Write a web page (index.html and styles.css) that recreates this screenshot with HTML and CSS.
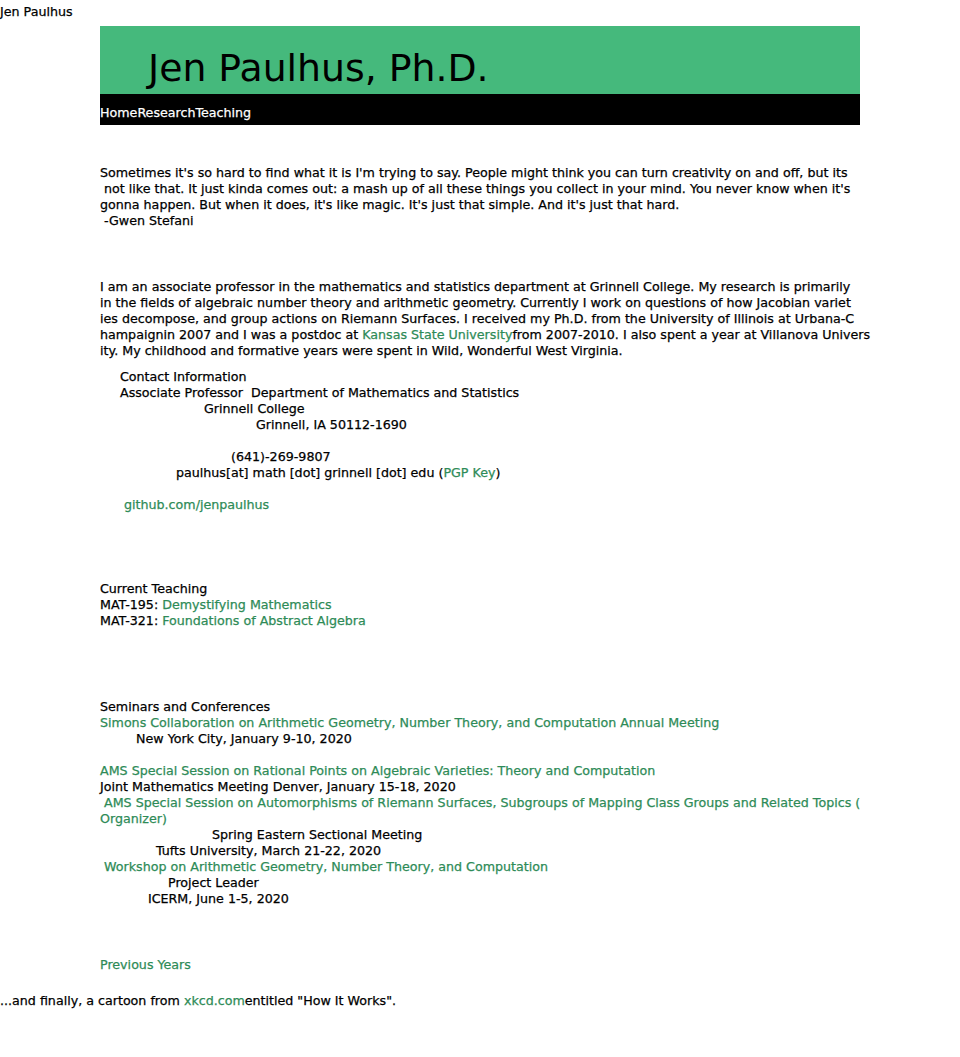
FILE: index.html
```html
<!DOCTYPE html>
<html>
<head>
<meta charset="utf-8">
<title>Jen Paulhus</title>
<link rel="stylesheet" href="styles.css">
</head>
<body>
<div class="site-name">Jen Paulhus</div>
<div class="page">
  <header class="banner">
    <h1 class="banner-title">Jen Paulhus, Ph.D.</h1>
  </header>
  <nav class="nav"><a href="#">Home</a><a href="#">Research</a><a href="#">Teaching</a></nav>

  <p class="quote">Sometimes it's so hard to find what it is I'm trying to say. People might think you can turn creativity on and off, but its<br>&nbsp;not like that. It just kinda comes out: a mash up of all these things you collect in your mind. You never know when it's<br>gonna happen. But when it does, it's like magic. It's just that simple. And it's just that hard.<br>&nbsp;-Gwen Stefani</p>

  <p class="bio">I am an associate professor in the mathematics and statistics department at Grinnell College. My research is primarily<br>in the fields of algebraic number theory and arithmetic geometry. Currently I work on questions of how Jacobian variet<br>ies decompose, and group actions on Riemann Surfaces. I received my Ph.D. from the University of Illinois at Urbana-C<br>hampaignin 2007 and I was a postdoc at <a href="#">Kansas State University</a>from 2007-2010. I also spent a year at Villanova Univers<br>ity. My childhood and formative years were spent in Wild, Wonderful West Virginia.</p>

  <div class="contact">
    <div class="line in-20">Contact Information</div>
    <div class="line in-20">Associate Professor&nbsp; Department of Mathematics and Statistics</div>
    <div class="line in-104">Grinnell College</div>
    <div class="line in-156">Grinnell, IA 50112-1690</div>
    <div class="line blank"></div>
    <div class="line in-131">(641)-269-9807</div>
    <div class="line in-76">paulhus[at] math [dot] grinnell [dot] edu (<a href="#">PGP Key</a>)</div>
    <div class="line blank"></div>
    <div class="line in-24"><a href="#">github.com/jenpaulhus</a></div>
  </div>

  <section class="teaching">
    <div class="line">Current Teaching</div>
    <div class="line">MAT-195: <a href="#">Demystifying Mathematics</a></div>
    <div class="line">MAT-321: <a href="#">Foundations of Abstract Algebra</a></div>
  </section>

  <section class="seminars">
    <div class="line">Seminars and Conferences</div>
    <div class="line"><a href="#">Simons Collaboration on Arithmetic Geometry, Number Theory, and Computation Annual Meeting</a></div>
    <div class="line in-36">New York City, January 9-10, 2020</div>
    <div class="line blank"></div>
    <div class="line"><a href="#">AMS Special Session on Rational Points on Algebraic Varieties: Theory and Computation</a></div>
    <div class="line">Joint Mathematics Meeting Denver, January 15-18, 2020</div>
    <div class="line in-4"><a href="#">AMS Special Session on Automorphisms of Riemann Surfaces, Subgroups of Mapping Class Groups and Related Topics (</a></div>
    <div class="line"><a href="#">Organizer)</a></div>
    <div class="line in-112">Spring Eastern Sectional Meeting</div>
    <div class="line in-56">Tufts University, March 21-22, 2020</div>
    <div class="line in-4"><a href="#">Workshop on Arithmetic Geometry, Number Theory, and Computation</a></div>
    <div class="line in-68">Project Leader</div>
    <div class="line in-48">ICERM, June 1-5, 2020</div>
  </section>

  <div class="previous"><a href="#">Previous Years</a></div>
</div>
<p class="closing">...and finally, a cartoon from <a href="#">xkcd.com</a>entitled "How It Works".</p>
</body>
</html>
```

FILE: styles.css
```css
html, body {
  margin: 0;
  padding: 0;
  background: #ffffff;
}
body {
  font-family: "DejaVu Sans", sans-serif;
  font-size: 12.66px;
  line-height: 16px;
  color: #000000;
  -webkit-text-stroke: 0.25px currentColor;
}
a {
  color: #2e8b57;
  text-decoration: none;
}
.site-name {
  height: 22px;
  padding-top: 4px;
}
.page {
  width: 760px;
  margin: 0 auto;
}
.banner {
  background: #45b97c;
  height: 68px;
  display: flex;
  align-items: flex-end;
}
.banner-title {
  margin: 0 0 4px 48px;
  font-weight: normal;
  font-size: 37.8px;
  line-height: 44px;
  color: #000;
  -webkit-text-stroke: 0;
}
.nav {
  background: #000;
  height: 31px;
  display: flex;
  align-items: center;
  padding-top: 6px;
  box-sizing: border-box;
}
.nav a {
  color: #fff;
}
.quote {
  margin: 40px 0 0 0;
  white-space: nowrap;
}
.bio {
  margin: 50px 0 0 0;
  white-space: nowrap;
}
.contact {
  margin-top: 10px;
}
.line {
  white-space: nowrap;
  height: 16px;
}
.in-4 { padding-left: 4px; }
.in-20 { padding-left: 20px; }
.in-24 { padding-left: 24px; }
.in-36 { padding-left: 36px; }
.in-48 { padding-left: 48px; }
.in-56 { padding-left: 56px; }
.in-68 { padding-left: 68px; }
.in-76 { padding-left: 76px; }
.in-104 { padding-left: 104px; }
.in-112 { padding-left: 112px; }
.in-131 { padding-left: 131px; }
.in-156 { padding-left: 156px; }
.teaching {
  margin-top: 68px;
}
.seminars {
  margin-top: 70px;
}
.previous {
  margin-top: 50px;
}
.closing {
  margin: 20px 0 0 0;
}
```
